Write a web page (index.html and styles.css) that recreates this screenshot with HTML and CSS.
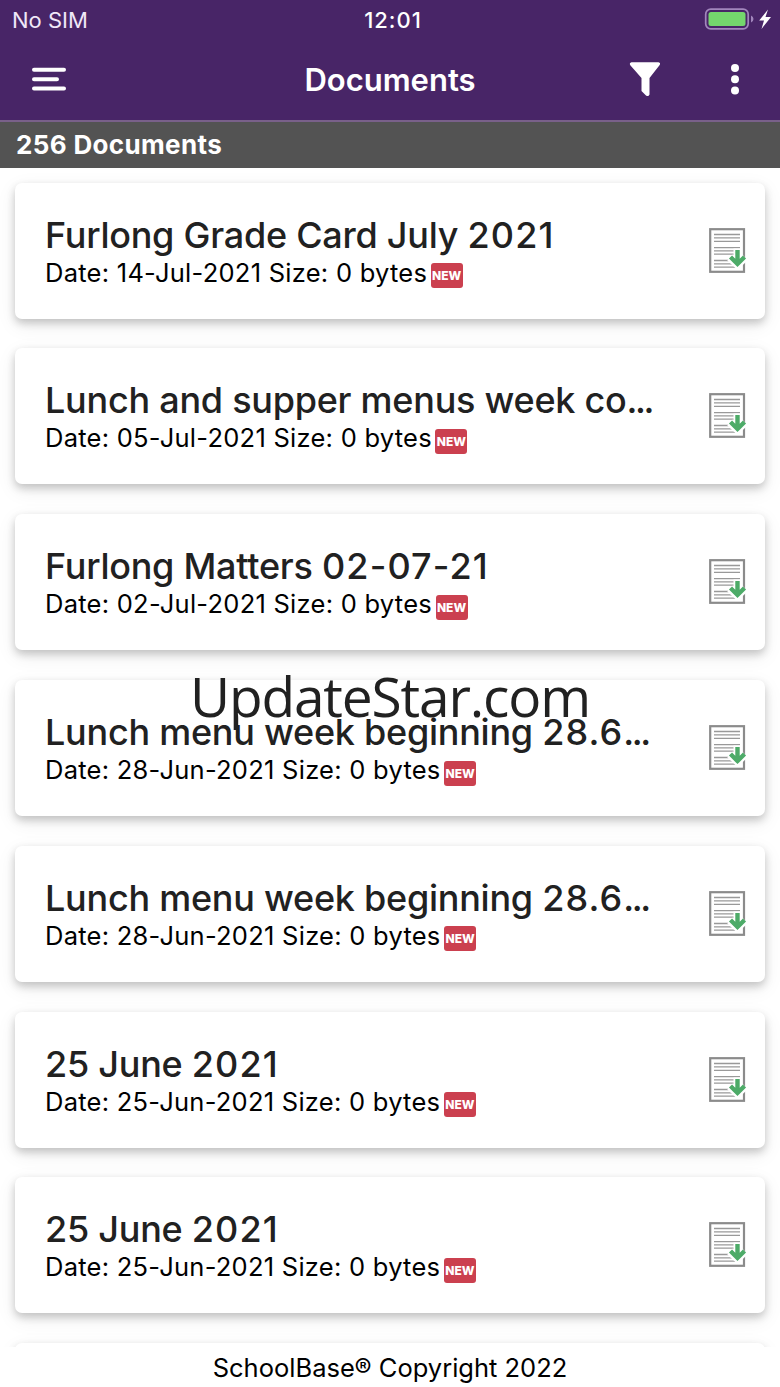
FILE: index.html
```html
<!DOCTYPE html>
<html lang="en">
<head>
    <meta charset="UTF-8">
    <meta name="viewport" content="width=device-width, initial-scale=1.0">
    <title>Documents</title>
    <link rel="stylesheet" href="styles.css">
</head>
<body>
    <!-- shared icons -->
    <svg class="sprite" width="0" height="0">
        <symbol id="icon-file" viewBox="0 0 38 46">
            <rect x="1.200" y="1.200" width="33.800" height="42.600" fill="#fff" stroke="#8b8b8b" stroke-width="2.200"/>
            <path d="M5 6.500H31M5 9.800H31M5 13.300H31M5 19.700H31M5 22.800H31M5 26.200H31M5 32.500H31M5 35.800H31M5 39.200H31" stroke="#999" stroke-width="1.300"/>
            <path d="M28.500 20.500V34M21 29.500L28.500 36.500L36 29.500" fill="none" stroke="#fff" stroke-width="8"/>
            <path d="M28.500 22V36M21.500 29L28.500 36L35.500 29" fill="none" stroke="#4dab68" stroke-width="4.400"/>
        </symbol>
    </svg>

    <header class="header">
        <div class="status-bar">
            <span class="carrier">No SIM</span>
            <span class="clock">12:01</span>
            <svg class="battery" width="68" height="24" viewBox="0 0 68 24">
                <rect x="1.700" y="1.200" width="42.500" height="19.600" rx="5" fill="none" stroke="#a286bd" stroke-width="1.700"/>
                <rect x="4.500" y="4" width="37" height="14" rx="2.500" fill="#74d66d"/>
                <path d="M47 7.500Q49.500 8.500 49.500 11T47 14.500Z" fill="#a286bd"/>
                <path d="M64 1.500L55.200 12.500H60L57.500 21L67 9H61.500Z" fill="#fff"/>
            </svg>
        </div>
        <div class="nav-bar">
            <svg class="menu-btn" width="36" height="26" viewBox="0 0 36 26">
                <path d="M2 3.800H32M2 13.200H25M2 22.600H32" stroke="#fff" stroke-width="4" stroke-linecap="round"/>
            </svg>
            <h1>Documents</h1>
            <div class="actions">
                <svg width="32" height="36" viewBox="0 0 32 36">
                    <path d="M2.500 1.300H29.500Q32 2 30.500 4.300L20.500 17V33.500Q19.500 36 17 34.500L12.500 30V17L1.300 4.300Q0 2 2.500 1.300Z" fill="#fff"/>
                </svg>
                <svg width="10" height="32" viewBox="0 0 10 32">
                    <circle cx="5" cy="5" r="4" fill="#fff"/>
                    <circle cx="5" cy="16.300" r="4" fill="#fff"/>
                    <circle cx="5" cy="27.600" r="4" fill="#fff"/>
                </svg>
            </div>
        </div>
    </header>

    <div class="count-bar">256 Documents</div>

    <main class="list">
        <div class="card">
            <div class="info">
                <h2>Furlong Grade Card July <span class="num">2021</span></h2>
                <p>Date: 14-Jul-2021 Size: 0 bytes<span class="new">NEW</span></p>
            </div>
            <svg class="file-icon"><use href="#icon-file"/></svg>
        </div>
        <div class="card">
            <div class="info">
                <h2>Lunch and supper menus week co<span class="dots">...</span></h2>
                <p>Date: 05-Jul-2021 Size: 0 bytes<span class="new">NEW</span></p>
            </div>
            <svg class="file-icon"><use href="#icon-file"/></svg>
        </div>
        <div class="card">
            <div class="info">
                <h2>Furlong Matters <span class="num">02-07-21</span></h2>
                <p>Date: 02-Jul-2021 Size: 0 bytes<span class="new">NEW</span></p>
            </div>
            <svg class="file-icon"><use href="#icon-file"/></svg>
        </div>
        <div class="card">
            <div class="info">
                <h2>Lunch menu week beginning <span class="num">28.6</span><span class="dots">...</span></h2>
                <p>Date: 28-Jun-2021 Size: 0 bytes<span class="new">NEW</span></p>
            </div>
            <svg class="file-icon"><use href="#icon-file"/></svg>
        </div>
        <div class="card">
            <div class="info">
                <h2>Lunch menu week beginning <span class="num">28.6</span><span class="dots">...</span></h2>
                <p>Date: 28-Jun-2021 Size: 0 bytes<span class="new">NEW</span></p>
            </div>
            <svg class="file-icon"><use href="#icon-file"/></svg>
        </div>
        <div class="card">
            <div class="info">
                <h2>25 June <span class="num">2021</span></h2>
                <p>Date: 25-Jun-2021 Size: 0 bytes<span class="new">NEW</span></p>
            </div>
            <svg class="file-icon"><use href="#icon-file"/></svg>
        </div>
        <div class="card">
            <div class="info">
                <h2>25 June <span class="num">2021</span></h2>
                <p>Date: 25-Jun-2021 Size: 0 bytes<span class="new">NEW</span></p>
            </div>
            <svg class="file-icon"><use href="#icon-file"/></svg>
        </div>
        <div class="card"></div>
    </main>

    <footer class="footer">SchoolBase® Copyright 2022</footer>

    <div class="watermark">UpdateStar.com</div>
</body>
</html>
```
FILE: styles.css
```css
* {
    box-sizing: border-box;
}
body {
    font-family: Inter, "Liberation Sans", sans-serif;
    background: white;
    display: flex;
    flex-direction: column;
    position: relative;
    height: 1387px;
    margin: 0;
    overflow: hidden;
}
h1, h2, p {
    margin: 0;
}
.sprite {
    position: absolute;
}
.header {
    flex: none;
    height: 122px;
    background-color: #482567;
    border-bottom: 2px solid #79608a;
    color: white;
}
.status-bar {
    display: grid;
    grid-template-columns: 1fr auto 1fr;
    align-items: center;
    height: 40px;
    padding: 0 8px 0 12px;
    font-size: 22px;
}
.carrier {
    color: #f0e8f8;
}
.clock {
    font-weight: 500;
    letter-spacing: 1px;
    padding-left: 2px;
}
.battery {
    justify-self: end;
}
.nav-bar {
    display: grid;
    grid-template-columns: 1fr auto 1fr;
    align-items: center;
    height: 78px;
    padding: 0 40px 0 32px;
}
.nav-bar h1 {
    font-size: 31px;
    font-weight: 600;
    padding-left: 8px;
}
.actions {
    display: flex;
    justify-content: flex-end;
    align-items: center;
    gap: 69px;
    padding-right: 0.5px;
}
.count-bar {
    flex: none;
    height: 46px;
    padding-left: 16px;
    background-color: #535353;
    color: white;
    font-size: 26px;
    font-weight: 700;
    letter-spacing: 0.35px;
    line-height: 45px;
}
.list {
    flex: 1;
    min-height: 0;
    overflow: hidden;
    display: flex;
    flex-direction: column;
    gap: 29.8px;
    padding: 14.700px 15px 0;
}
.card {
    flex: none;
    display: flex;
    align-items: center;
    justify-content: space-between;
    height: 136px;
    padding: 0 18px 0 30px;
    background: white;
    border-radius: 7px;
    box-shadow: 0 4px 8px rgba(0, 0, 0, 0.2), 0 6px 20px rgba(0, 0, 0, 0.08);
}
.info h2 {
    font-size: 36px;
    font-weight: 500;
    letter-spacing: -0.25px;
    line-height: 44px;
    color: #212121;
    white-space: nowrap;
}
.info .num {
    letter-spacing: 1.1px;
}
.info .dots {
    letter-spacing: -2.400px;
}
.info p {
    display: flex;
    align-items: center;
    font-size: 25.500px;
    letter-spacing: 0.26px;
    line-height: 32px;
    white-space: nowrap;
}
.new {
    width: 32px;
    height: 25px;
    margin: 6px 0 0 3.500px;
    border-radius: 3px;
    background-color: #cb404f;
    color: white;
    font-size: 12px;
    font-weight: 800;
    letter-spacing: 0;
    line-height: 25px;
    text-align: center;
}
.file-icon {
    flex: none;
    width: 38px;
    height: 46px;
}
.footer {
    flex: none;
    height: 40px;
    background: white;
    font-size: 25.500px;
    line-height: 41px;
    text-align: center;
}
.watermark {
    position: absolute;
    top: 659px;
    left: 0;
    width: 100%;
    color: #212121;
    font-family: "Open Sans", "Noto Sans", sans-serif;
    font-size: 55px;
    letter-spacing: -1.150px;
    line-height: 74px;
    text-align: center;
}
```
